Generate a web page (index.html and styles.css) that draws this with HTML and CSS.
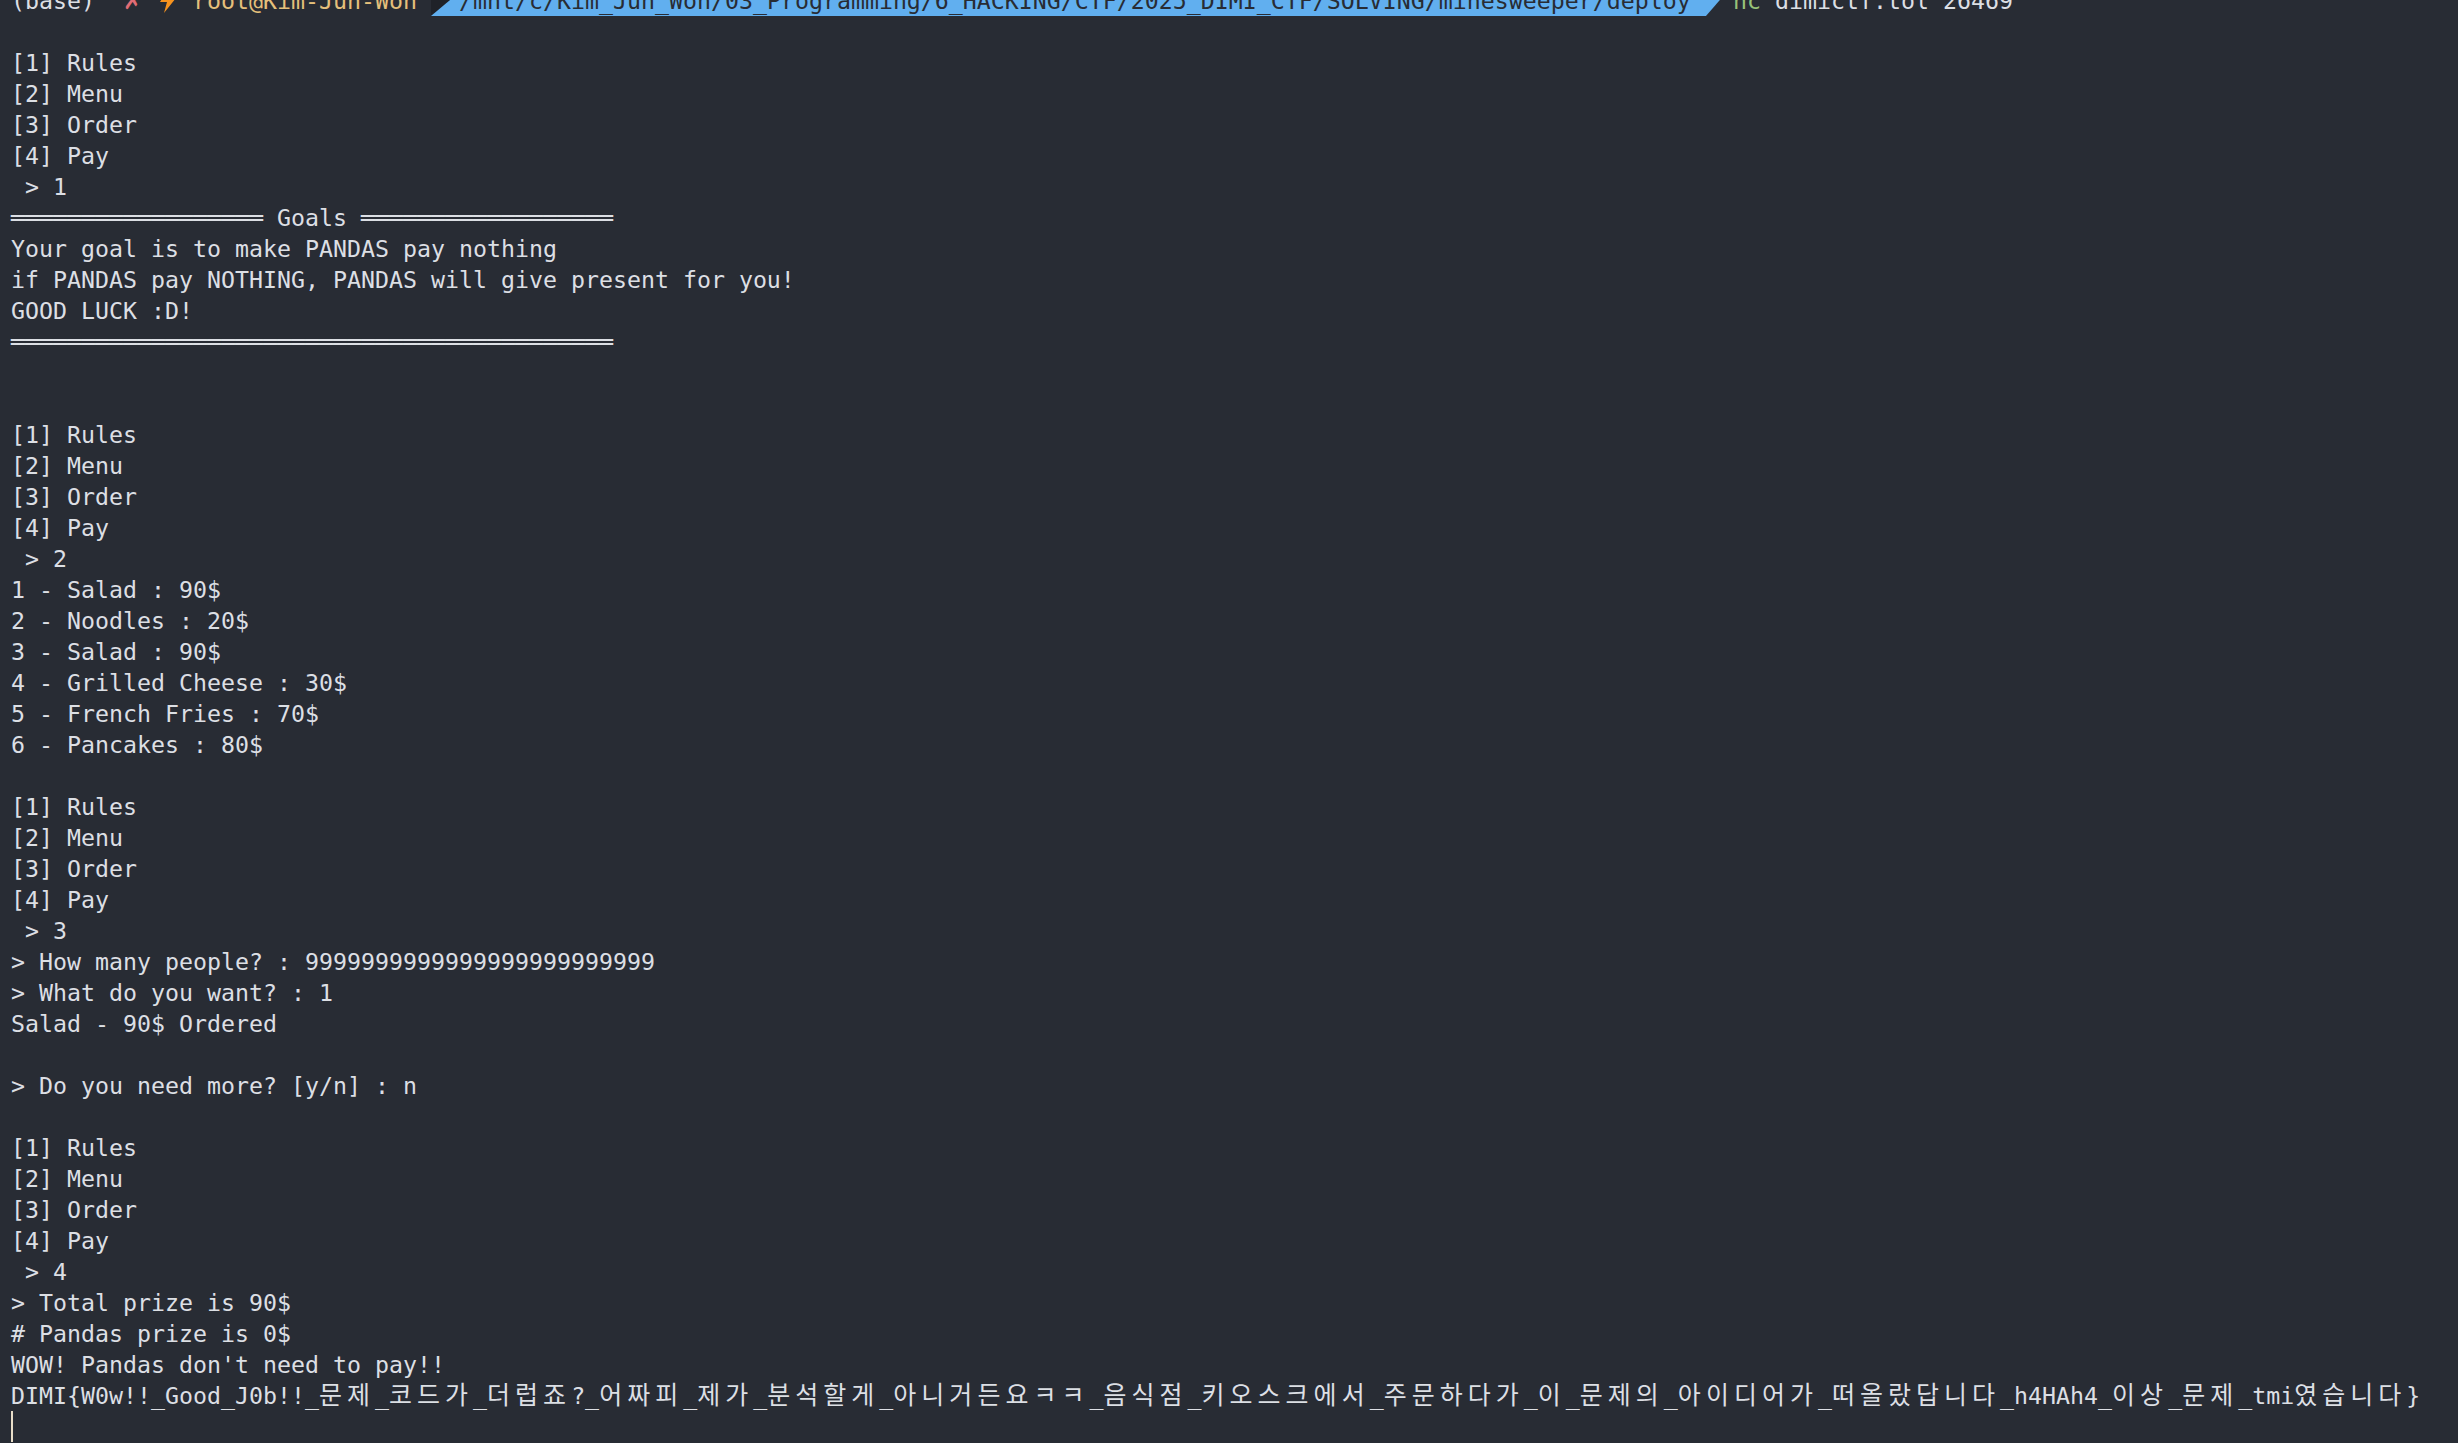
FILE: index.html
```html
<!DOCTYPE html>
<html lang="ko">
<head>
<meta charset="utf-8">
<title>Terminal</title>
<link rel="stylesheet" href="styles.css">
</head>
<body>
<main class="term">
<div class="ln">(base)  <span class="cell x">✗</span> <span class="cell2"><svg class="bolt" width="28" height="31" viewBox="0 0 28 31"><polygon points="18,2 9,17 16,17 13,28 25,13 18,13 22,2"/></svg></span> <span class="user">root@Kim-Jun-Won</span> <span class="seg"><span class="seg-in">  /mnt/c/Kim_Jun_Won/03_Programming/6_HACKING/CTF/2025_DIMI_CTF/SOLVING/minesweeper/deploy</span></span><span class="cmd">nc</span> dimictf.tol 26469</div>
<div class="ln"></div>
<div class="ln">[1] Rules</div>
<div class="ln">[2] Menu</div>
<div class="ln">[3] Order</div>
<div class="ln">[4] Pay</div>
<div class="ln"> &gt; 1</div>
<div class="ln">══════════════════ Goals ══════════════════</div>
<div class="ln">Your goal is to make PANDAS pay nothing</div>
<div class="ln">if PANDAS pay NOTHING, PANDAS will give present for you!</div>
<div class="ln">GOOD LUCK :D!</div>
<div class="ln">═══════════════════════════════════════════</div>
<div class="ln"></div>
<div class="ln"></div>
<div class="ln">[1] Rules</div>
<div class="ln">[2] Menu</div>
<div class="ln">[3] Order</div>
<div class="ln">[4] Pay</div>
<div class="ln"> &gt; 2</div>
<div class="ln">1 - Salad : 90$</div>
<div class="ln">2 - Noodles : 20$</div>
<div class="ln">3 - Salad : 90$</div>
<div class="ln">4 - Grilled Cheese : 30$</div>
<div class="ln">5 - French Fries : 70$</div>
<div class="ln">6 - Pancakes : 80$</div>
<div class="ln"></div>
<div class="ln">[1] Rules</div>
<div class="ln">[2] Menu</div>
<div class="ln">[3] Order</div>
<div class="ln">[4] Pay</div>
<div class="ln"> &gt; 3</div>
<div class="ln">&gt; How many people? : 9999999999999999999999999</div>
<div class="ln">&gt; What do you want? : 1</div>
<div class="ln">Salad - 90$ Ordered</div>
<div class="ln"></div>
<div class="ln">&gt; Do you need more? [y/n] : n</div>
<div class="ln"></div>
<div class="ln">[1] Rules</div>
<div class="ln">[2] Menu</div>
<div class="ln">[3] Order</div>
<div class="ln">[4] Pay</div>
<div class="ln"> &gt; 4</div>
<div class="ln">&gt; Total prize is 90$</div>
<div class="ln"># Pandas prize is 0$</div>
<div class="ln">WOW! Pandas don't need to pay!!</div>
<div class="ln">DIMI{W0w!!_Good_J0b!!_<span class="ko">문제</span>_<span class="ko">코드가</span>_<span class="ko">더럽죠</span>?_<span class="ko">어짜피</span>_<span class="ko">제가</span>_<span class="ko">분석할게</span>_<span class="ko">아니거든요ㅋㅋ</span>_<span class="ko">음식점</span>_<span class="ko">키오스크에서</span>_<span class="ko">주문하다가</span>_<span class="ko">이</span>_<span class="ko">문제의</span>_<span class="ko">아이디어가</span>_<span class="ko">떠올랐답니다</span>_h4HAh4_<span class="ko">이상</span>_<span class="ko">문제</span>_tmi<span class="ko">였습니다</span>}</div>
<div class="ln"><span class="cursor"></span></div>
</main>
</body>
</html>
```
FILE: styles.css
```css
html, body {
  margin: 0;
  padding: 0;
  background: #282c34;
  overflow: hidden;
}

.term {
  margin-top: -15px;
  padding-left: 11px;
  font-family: "DejaVu Sans Mono", "Liberation Mono", monospace;
  font-size: 23.25px;
  color: #dcdfe4;
}

.ln {
  height: 31px;
  line-height: 31px;
  white-space: pre;
}

.cell {
  display: inline-block;
  width: 14px;
  text-align: center;
  vertical-align: top;
}

.cell2 {
  display: inline-block;
  width: 28px;
  height: 31px;
  vertical-align: top;
}

.x {
  color: #e06c75;
  font-family: "DejaVu Sans", sans-serif;
}

.bolt {
  display: block;
  fill: #f7931e;
}

.user {
  color: #e5c07b;
}

.seg {
  display: inline-block;
  width: 1302px;
  height: 31px;
  vertical-align: top;
  background: linear-gradient(to right, #1f2228 0, #1f2228 37px, transparent 37px);
}

.seg-in {
  display: block;
  height: 31px;
  background: #61afef;
  color: #282c34;
  clip-path: polygon(37px 0, 1302px 0, 1275px 100%, 0 100%);
}

.cmd {
  color: #98c379;
}

.ko {
  font-family: "Noto Sans CJK KR", sans-serif;
  font-size: 25px;
  letter-spacing: 5.02px;
  line-height: 0;
}

.cursor {
  display: inline-block;
  width: 2px;
  height: 31px;
  vertical-align: top;
  background: #e8ddc8;
}
```
